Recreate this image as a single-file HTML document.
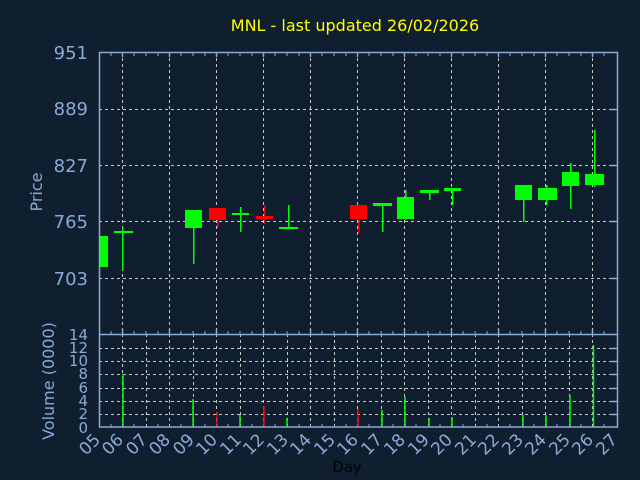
<!DOCTYPE html><html><head><style>body{margin:0;background:#0f1f30}svg{display:block}</style></head><body>
<svg width="640" height="480" xmlns="http://www.w3.org/2000/svg" font-family="'DejaVu Sans','Liberation Sans',sans-serif">
<rect width="640" height="480" fill="#0f1f30"/>
<text x="355" y="31" fill="#ffff00" font-size="16" text-anchor="middle">MNL - last updated 26/02/2026</text>
<g stroke="#c8c8c8" stroke-width="1" stroke-dasharray="3,3">
<path d="M99 109.5H617M99 165.5H617M99 221.5H617M99 278.5H617"/>
<path d="M122.5 52V334M169.5 52V334M216.5 52V334M263.5 52V334M310.5 52V334M357.5 52V334M404.5 52V334M451.5 52V334M498.5 52V334M545.5 52V334M592.5 52V334"/>
<path d="M99 348.5H617M99 361.5H617M99 374.5H617M99 388.5H617M99 401.5H617M99 414.5H617"/>
<path d="M122.5 334V427M146.5 334V427M169.5 334V427M193.5 334V427M216.5 334V427M240.5 334V427M263.5 334V427M287.5 334V427M310.5 334V427M334.5 334V427M357.5 334V427M381.5 334V427M404.5 334V427M428.5 334V427M451.5 334V427M475.5 334V427M498.5 334V427M522.5 334V427M545.5 334V427M569.5 334V427M592.5 334V427"/>
</g>
<g fill="#00ff00">
<rect x="99" y="236" width="9" height="31"/>
<rect x="114" y="231" width="19" height="2"/><rect x="122" y="227" width="1.5" height="43"/>
<rect x="185" y="210" width="17" height="18"/><rect x="193" y="210" width="1.5" height="54"/>
<rect x="232" y="213" width="17" height="2"/><rect x="240" y="207" width="1.5" height="25"/>
<rect x="279" y="227" width="19" height="2"/><rect x="288" y="205" width="1.5" height="24"/>
<rect x="373" y="203" width="19" height="3"/><rect x="382" y="203" width="1.5" height="29"/>
<rect x="397" y="197" width="17" height="22"/><rect x="405" y="190" width="1.5" height="30"/>
<rect x="420" y="190" width="19" height="3"/><rect x="429" y="190" width="1.5" height="10"/>
<rect x="444" y="188" width="17" height="3"/><rect x="452" y="188" width="1.5" height="17"/>
<rect x="515" y="185" width="17" height="15"/><rect x="523" y="185" width="1.5" height="37"/>
<rect x="538" y="188" width="19" height="12"/><rect x="546" y="185" width="1.5" height="20"/>
<rect x="562" y="172" width="17" height="14"/><rect x="570" y="163" width="1.5" height="46"/>
<rect x="585" y="174" width="19" height="11"/><rect x="594" y="130" width="1.5" height="57"/>
</g>
<g fill="#ff0000">
<rect x="209" y="208" width="17" height="12"/><rect x="217" y="208" width="1.5" height="20"/>
<rect x="256" y="216" width="17" height="3"/><rect x="264" y="205" width="1.5" height="19"/>
<rect x="350" y="205" width="17" height="14"/><rect x="358" y="205" width="1.5" height="28"/>
</g>
<g stroke="#00ff00" stroke-width="1.5">
<path d="M123 374V427M193 399V427M240 415V427M287 418V427M382 410V427M405 397V427M429 418V427M452 417V427M523 415V427M546 415V427M570 395V427M593.5 345V427"/>
</g>
<g stroke="#ff0000" stroke-width="1.5"><path d="M217 412V427M264 406V427M358 409V427"/></g>
<g stroke="#8aaad6" fill="none" stroke-width="1.5">
<rect x="99.5" y="52.5" width="518" height="374.5"/>
<path d="M99 334.5H617"/>
<path stroke-width="1" d="M111 53v3M134 53v3M146 53v3M158 53v3M181 53v3M193 53v3M205 53v3M228 53v3M240 53v3M252 53v3M275 53v3M287 53v3M299 53v3M322 53v3M334 53v3M346 53v3M369 53v3M381 53v3M393 53v3M416 53v3M428 53v3M440 53v3M463 53v3M475 53v3M487 53v3M510 53v3M522 53v3M534 53v3M557 53v3M569 53v3M581 53v3M604 53v3"/>
<path stroke-width="1" d="M111 334v-3M134 334v-3M146 334v-3M158 334v-3M181 334v-3M193 334v-3M205 334v-3M228 334v-3M240 334v-3M252 334v-3M275 334v-3M287 334v-3M299 334v-3M322 334v-3M334 334v-3M346 334v-3M369 334v-3M381 334v-3M393 334v-3M416 334v-3M428 334v-3M440 334v-3M463 334v-3M475 334v-3M487 334v-3M510 334v-3M522 334v-3M534 334v-3M557 334v-3M569 334v-3M581 334v-3M604 334v-3"/>
<path stroke-width="1" d="M111 427v-3M134 427v-3M158 427v-3M181 427v-3M205 427v-3M228 427v-3M252 427v-3M275 427v-3M299 427v-3M322 427v-3M346 427v-3M369 427v-3M393 427v-3M416 427v-3M440 427v-3M463 427v-3M487 427v-3M510 427v-3M534 427v-3M557 427v-3M581 427v-3M604 427v-3"/>
<path d="M122.5 52v5M169.5 52v5M216.5 52v5M263.5 52v5M310.5 52v5M357.5 52v5M404.5 52v5M451.5 52v5M498.5 52v5M545.5 52v5M592.5 52v5M122.5 334v-5M169.5 334v-5M216.5 334v-5M263.5 334v-5M310.5 334v-5M357.5 334v-5M404.5 334v-5M451.5 334v-5M498.5 334v-5M545.5 334v-5M592.5 334v-5"/>
<path d="M611 109.5h6M611 165.5h6M611 221.5h6M611 278.5h6M611 348.5h6M611 361.5h6M611 374.5h6M611 388.5h6M611 401.5h6M611 414.5h6"/>
</g>
<g fill="#8aaad6" font-size="18" text-anchor="end">
<text x="88" y="59">951</text><text x="88" y="115">889</text><text x="88" y="172">827</text><text x="88" y="228">765</text><text x="88" y="285">703</text>
</g>
<g fill="#8aaad6" font-size="15" text-anchor="end">
<text x="88" y="340">14</text><text x="88" y="353">12</text><text x="88" y="366">10</text><text x="88" y="379">8</text><text x="88" y="393">6</text><text x="88" y="406">4</text><text x="88" y="419">2</text><text x="88" y="433">0</text>
</g>
<text transform="translate(42,192) rotate(-90)" fill="#8aaad6" font-size="16" text-anchor="middle">Price</text>
<text transform="translate(54,381) rotate(-90)" fill="#8aaad6" font-size="16" text-anchor="middle">Volume (0000)</text>
<g fill="#8aaad6" font-size="17">
<text transform="translate(86,456) rotate(-45)">05</text>
<text transform="translate(109,456) rotate(-45)">06</text>
<text transform="translate(133,456) rotate(-45)">07</text>
<text transform="translate(156,456) rotate(-45)">08</text>
<text transform="translate(180,456) rotate(-45)">09</text>
<text transform="translate(203,456) rotate(-45)">10</text>
<text transform="translate(227,456) rotate(-45)">11</text>
<text transform="translate(250,456) rotate(-45)">12</text>
<text transform="translate(274,456) rotate(-45)">13</text>
<text transform="translate(297,456) rotate(-45)">14</text>
<text transform="translate(321,456) rotate(-45)">15</text>
<text transform="translate(344,456) rotate(-45)">16</text>
<text transform="translate(368,456) rotate(-45)">17</text>
<text transform="translate(391,456) rotate(-45)">18</text>
<text transform="translate(415,456) rotate(-45)">19</text>
<text transform="translate(438,456) rotate(-45)">20</text>
<text transform="translate(462,456) rotate(-45)">21</text>
<text transform="translate(485,456) rotate(-45)">22</text>
<text transform="translate(509,456) rotate(-45)">23</text>
<text transform="translate(532,456) rotate(-45)">24</text>
<text transform="translate(556,456) rotate(-45)">25</text>
<text transform="translate(579,456) rotate(-45)">26</text>
<text transform="translate(603,456) rotate(-45)">27</text>
</g>
<text x="347" y="472" fill="#000000" font-size="15" text-anchor="middle">Day</text>
</svg>
</body></html>
